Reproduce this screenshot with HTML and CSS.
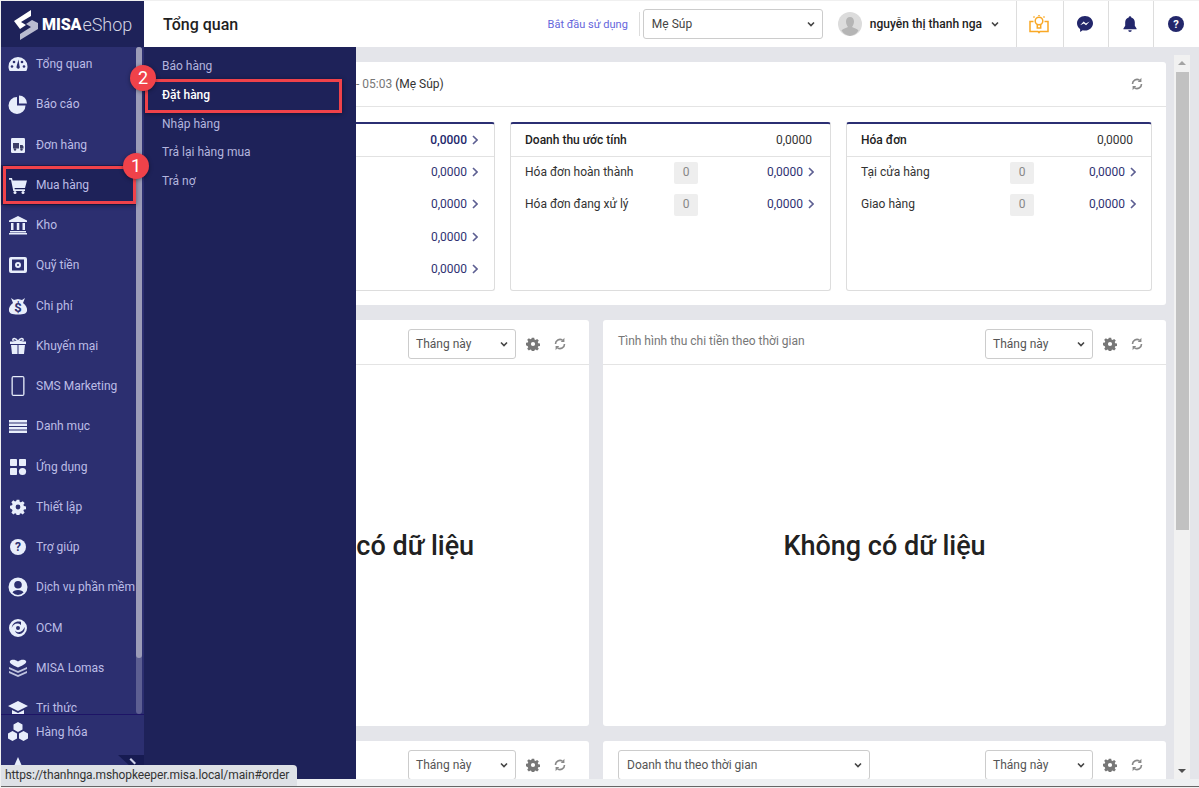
FILE: index.html
```html
<!DOCTYPE html>
<html lang="vi">
<head>
<meta charset="utf-8">
<title>MISA eShop - Tổng quan</title>
<link rel="stylesheet" href="styles.css">
</head>
<body>
<svg class="defs" width="0" height="0" aria-hidden="true">
  <symbol id="chev" viewBox="0 0 8 8"><path d="M1 2.5l3 3 3-3" fill="none" stroke="currentColor" stroke-width="1.6"/></symbol>
  <symbol id="arrow" viewBox="0 0 6 10"><path d="M1 1l4 4-4 4" fill="none" stroke="currentColor" stroke-width="1.6"/></symbol>
  <symbol id="refresh" viewBox="0 0 14 14"><path d="M2.500 7A4.500 4.500 0 0 1 9.500 3.200M11.500 7A4.500 4.500 0 0 1 4.500 10.800" fill="none" stroke="currentColor" stroke-width="1.6"/><path d="M7.800 5h3.600V.8zM6.200 9H2.600v4.200z" fill="currentColor"/></symbol>
  <symbol id="gear" viewBox="0 0 20 20"><path fill="currentColor" fill-rule="evenodd" d="M8.3 1h3.4l.5 2.6 1.5.6 2.2-1.5 2.4 2.4-1.5 2.2.6 1.5 2.6.5v3.4l-2.6.5-.6 1.5 1.5 2.2-2.4 2.4-2.2-1.5-1.5.6-.5 2.6H8.3l-.5-2.6-1.5-.6-2.2 1.5-2.4-2.4 1.5-2.2-.6-1.5L0 11.7V8.3l2.6-.5.6-1.5-1.5-2.2 2.4-2.4 2.2 1.5 1.5-.6zM10 7a3 3 0 1 0 0 6 3 3 0 0 0 0-6z"/></symbol>
</svg>
<div class="window">
  <div class="app">
    <aside class="sidebar">
      <div class="logo">
        <svg class="logo-mark" viewBox="0 0 26 31" aria-hidden="true"><path fill="#fff" d="M1 12L18 1v6L8 13l5 3-6 4z"/><path fill="#b9bbcf" d="M25 14v6L7 31v-6l11-7-5-3 6-4z"/></svg>
        <span class="logo-misa">MISA</span><span class="logo-shop">eShop</span>
      </div>
      <nav class="menu">
        <div class="menu-inner">
          <a class="item"><svg class="ic" viewBox="0 0 20 20"><path d="M10 3a9.500 9.500 0 0 0-9.500 9.500c0 1.700.4 3 1.200 4.500h16.600c.8-1.500 1.200-2.800 1.200-4.500A9.500 9.500 0 0 0 10 3z"/><g fill="#2c2f70"><circle cx="4" cy="12.500" r="1.300"/><circle cx="6" cy="8" r="1.300"/><circle cx="16" cy="12.500" r="1.300"/><circle cx="14" cy="8" r="1.300"/><path d="M10.500 5.500l1 6.500a1.700 1.700 0 1 1-2.800.1z"/></g></svg><span>Tổng quan</span></a>
          <a class="item"><svg class="ic" viewBox="0 0 20 20"><path d="M9 3v8.500h8.500A8.500 8.500 0 1 1 9 3z"/><path d="M11 1.500A8 8 0 0 1 19 9.500h-8z"/></svg><span>Báo cáo</span></a>
          <a class="item"><svg class="ic" viewBox="0 0 20 20"><rect x="3" y="3" width="14" height="15" rx="1.200"/><path fill="#3a3d66" d="M5 8h6v5.500H5zM12 10h2.500l1 1.500v2H12z"/><circle cx="7" cy="14.500" r="1.200" fill="#3a3d66"/><circle cx="13.500" cy="14.500" r="1.200" fill="#3a3d66"/></svg><span>Đơn hàng</span></a>
          <a class="item active"><svg class="ic" viewBox="0 0 20 20"><path d="M1 3h3l.6 2.500H19l-2 7.500H6.500l.3 1.300H17v1.700H5.300L3 4.700H1z"/><circle cx="7" cy="17.500" r="1.500"/><circle cx="15" cy="17.500" r="1.500"/></svg><span>Mua hàng</span></a>
          <a class="item"><svg class="ic" viewBox="0 0 20 20"><path d="M10 1l9 4.500V7H1V5.500zM2 16h16v1.500H2zM1 18h18v1.500H1zM3 8h2.500v7H3zM8.800 8h2.500v7H8.800zM14.500 8H17v7h-2.500z"/></svg><span>Kho</span></a>
          <a class="item"><svg class="ic" viewBox="0 0 20 20"><path fill-rule="evenodd" d="M3 2h14a2 2 0 0 1 2 2v12a2 2 0 0 1-2 2H3a2 2 0 0 1-2-2V4a2 2 0 0 1 2-2zm1 2.500v11h12v-11zM10 7a3 3 0 1 1 0 6 3 3 0 0 1 0-6zm0 2a1 1 0 1 0 0 2 1 1 0 0 0 0-2z"/></svg><span>Quỹ tiền</span></a>
          <a class="item"><svg class="ic" viewBox="0 0 20 20"><path d="M3 2l3 2 4-1 4 1 3-2-2 5c3 2 4.500 5 4 8-.5 2.500-3 3.500-9 3.500S1.500 17.500 1 15c-.5-3 1-6 4-8z"/><text x="10" y="16" class="ic-text">$</text></svg><span>Chi phí</span></a>
          <a class="item"><svg class="ic" viewBox="0 0 20 20"><path d="M3 9h6.500v9H4zM10.500 9H17l-1 9h-5.500zM2 5.500h16V8H2z"/><path fill="none" stroke="currentColor" stroke-width="1.500" d="M10 5.500C8 1.500 4 2 5 4.500c.5 1 3 1 5 1zm0 0c2-4 6-3.500 5-1-.5 1-3 1-5 1z"/></svg><span>Khuyến mại</span></a>
          <a class="item"><svg class="ic" viewBox="0 0 20 20"><path fill-rule="evenodd" d="M5.500 0h9a2 2 0 0 1 2 2v16a2 2 0 0 1-2 2h-9a2 2 0 0 1-2-2V2a2 2 0 0 1 2-2zm-.7 1.200v17.600h10.400V1.200z"/></svg><span>SMS Marketing</span></a>
          <a class="item"><svg class="ic" viewBox="0 0 20 20"><path d="M1 4h18v2.500H1zM1 7.500h18V10H1zM1 11h18v2.500H1zM1 14.500h18V17H1z"/></svg><span>Danh mục</span></a>
          <a class="item"><svg class="ic" viewBox="0 0 20 20"><rect x="2" y="2" width="7" height="7" rx=".8"/><rect x="11" y="2" width="7" height="7" rx=".8"/><rect x="2" y="11" width="7" height="7" rx=".8"/><circle cx="14.500" cy="14.500" r="3.600"/></svg><span>Ứng dụng</span></a>
          <a class="item"><svg class="ic small" viewBox="0 0 20 20"><use href="#gear"/></svg><span>Thiết lập</span></a>
          <a class="item"><svg class="ic small" viewBox="0 0 20 20"><circle cx="10" cy="10" r="10"/><text x="10" y="15.500" class="ic-text big">?</text></svg><span>Trợ giúp</span></a>
          <a class="item"><svg class="ic" viewBox="0 0 20 20"><path fill-rule="evenodd" d="M10 .5a9.500 9.500 0 1 1 0 19 9.500 9.500 0 0 1 0-19zm0 3.500a3.800 3.800 0 1 0 0 7.600A3.800 3.800 0 0 0 10 4zm0 9c-2.800 0-5 1-5.500 2.500a7.500 7.500 0 0 0 11 0C15 14 12.800 13 10 13z"/></svg><span>Dịch vụ phần mềm</span></a>
          <a class="item"><svg class="ic" viewBox="0 0 20 20"><path fill-rule="evenodd" d="M10 1a9 9 0 1 1 0 18 9 9 0 0 1 0-18zm3 2.800c-4.500-1.500-9 1.500-9.200 6 1-3 4-5 7.200-4 .7.200 1.500.800 2 1.500zM16.500 9c-1 3.500-4 6-7.500 5-.8-.2-1.500-.7-2-1.500.5 2.500 3 4 5.500 3.300 3-.8 4.800-3.800 4-6.800zM10 8a2 2 0 1 0 0 4 2 2 0 0 0 0-4z"/></svg><span>OCM</span></a>
          <a class="item"><svg class="ic" viewBox="0 0 20 20"><path d="M10 9.500C4 7 1 5 2 3c1-1.500 5-2 8 .5 3-2.500 7-2 8-.5 1 2-2 4-8 6.500z"/><path fill="#bfc3de" d="M1 9l9 4 9-4v2l-9 4-9-4zM1 13l9 4 9-4v2l-9 4-9-4z"/></svg><span>MISA Lomas</span></a>
          <a class="item"><svg class="ic" viewBox="0 0 20 20"><path d="M10 3L0 8l10 5 10-5zM4 12v4c2 2 10 2 12 0v-4l-6 3z"/></svg><span>Tri thức</span></a>
        </div>
        <div class="menu-track"><div class="menu-thumb"></div></div>
      </nav>
      <div class="foot">
        <a class="item foot-item"><svg class="ic big-ic" viewBox="0 0 22 20"><path d="M11 0l4.500 2.500v5L11 10 6.500 7.500v-5zM5.500 9l4.500 2.500v5L5.500 19 1 16.500v-5zM16.500 9l4.500 2.500v5L16.500 19 12 16.500v-5z"/></svg><span>Hàng hóa</span></a>
        <a class="item foot-item"><svg class="ic" viewBox="0 0 20 20"><path d="M10 2L3 18h14z"/></svg></a>
        <svg class="corner" viewBox="0 0 26 24" aria-hidden="true"><path d="M0 0h26v24z" fill="#171b52"/><path d="M13 3l5 5-1.500 1.500-5-5z" fill="#cfd2ea"/></svg>
      </div>
    </aside>

    <div class="main">
      <header class="topbar">
        <h1 class="page-title">Tổng quan</h1>
        <a class="start-link">Bắt đầu sử dụng</a>
        <span class="sep"></span>
        <div class="select shop-select"><span>Mẹ Súp</span><svg class="chev"><use href="#chev"/></svg></div>
        <svg class="avatar" viewBox="0 0 24 24" aria-hidden="true"><circle cx="12" cy="12" r="12" fill="#dcdcdc"/><path fill="#b5b5b5" d="M12 5c2.500 0 4 2 4 4.500S14.800 14 14 15c2 1 5 1.500 6.500 3.500A12 12 0 0 1 12 24a12 12 0 0 1-8.500-5.500C5 16.500 8 16 10 15c-.8-1-2-3-2-5.500S9.500 5 12 5z"/></svg>
        <span class="user-name">nguyễn thị thanh nga</span>
        <svg class="chev user-chev"><use href="#chev"/></svg>
        <div class="tools">
          <button class="tool t1"><svg viewBox="0 0 20 20" width="20" height="20"><g fill="none" stroke="#f9a825" stroke-width="1.500"><path d="M4.500 7.500H1v10h8l1 1.200 1-1.200h8v-10h-3.500"/><circle cx="10" cy="7" r="3.800"/><path d="M8.300 10.500v3.500h3.400v-3.500M10 1v1M4.500 2.500l1 1M15.500 2.500l-1 1"/></g></svg></button>
          <button class="tool t2"><svg viewBox="0 0 18 18" width="16" height="16"><path fill="#23276b" d="M9 0c5 0 9 3.600 9 8.200s-4 8.200-9 8.200c-.9 0-1.700-.1-2.500-.3L3.500 18v-3.300C1.400 13.200 0 10.900 0 8.200 0 3.600 4 0 9 0z"/><path fill="#fff" d="M3.500 10.500l4-4.200 2.500 2.200 4.200-2.200-4 4.200-2.500-2.200z"/></svg></button>
          <button class="tool t3"><svg viewBox="0 0 16 18" width="14" height="16"><path fill="#23276b" d="M8 0a1.500 1.500 0 0 1 1.500 1.500C12 2.200 13.500 4.500 13.500 7v4l2 3v1H.5v-1l2-3V7c0-2.500 1.500-4.800 4-5.500A1.500 1.500 0 0 1 8 0zM6 16h4a2 2 0 0 1-4 0z"/></svg></button>
          <button class="tool t4"><svg viewBox="0 0 20 20" width="16" height="16"><circle cx="10" cy="10" r="10" fill="#23276b"/><text x="10" y="15.500" class="tool-q">?</text></svg></button>
        </div>
      </header>

      <div class="body">
        <div class="content">
          <section class="panel">
            <div class="panel-head">
              <p class="period"><span class="muted">- 05:03</span> (Mẹ Súp)</p>
              <svg class="refresh"><use href="#refresh"/></svg>
            </div>
            <div class="cards">
              <article class="card c1">
                <div class="card-head"><span class="grow"></span><b class="navy">0,0000</b><svg class="arr"><use href="#arrow"/></svg></div>
                <div class="rows rows-tight">
                  <div class="row"><span class="val">0,0000</span><svg class="arr"><use href="#arrow"/></svg></div>
                  <div class="row"><span class="val">0,0000</span><svg class="arr"><use href="#arrow"/></svg></div>
                  <div class="row"><span class="val">0,0000</span><svg class="arr"><use href="#arrow"/></svg></div>
                  <div class="row"><span class="val">0,0000</span><svg class="arr"><use href="#arrow"/></svg></div>
                </div>
              </article>
              <article class="card c2">
                <div class="card-head"><b>Doanh thu ước tính</b><span class="grow"></span><span>0,0000</span></div>
                <div class="rows">
                  <div class="row"><span class="label">Hóa đơn hoàn thành</span><span class="pill">0</span><span class="val">0,0000</span><svg class="arr"><use href="#arrow"/></svg></div>
                  <div class="row"><span class="label">Hóa đơn đang xử lý</span><span class="pill">0</span><span class="val">0,0000</span><svg class="arr"><use href="#arrow"/></svg></div>
                </div>
              </article>
              <article class="card c3">
                <div class="card-head"><b>Hóa đơn</b><span class="grow"></span><span>0,0000</span></div>
                <div class="rows">
                  <div class="row"><span class="label">Tại cửa hàng</span><span class="pill">0</span><span class="val">0,0000</span><svg class="arr"><use href="#arrow"/></svg></div>
                  <div class="row"><span class="label">Giao hàng</span><span class="pill">0</span><span class="val">0,0000</span><svg class="arr"><use href="#arrow"/></svg></div>
                </div>
              </article>
            </div>
          </section>

          <div class="charts">
            <section class="chart">
              <div class="chart-head">
                <span class="grow"></span>
                <div class="select month"><span>Tháng này</span><svg class="chev"><use href="#chev"/></svg></div>
                <svg class="gear"><use href="#gear"/></svg>
                <svg class="refresh"><use href="#refresh"/></svg>
              </div>
              <div class="no-data">Không có dữ liệu</div>
            </section>
            <section class="chart">
              <div class="chart-head">
                <span class="chart-title">Tình hình thu chi tiền theo thời gian</span>
                <span class="grow"></span>
                <div class="select month"><span>Tháng này</span><svg class="chev"><use href="#chev"/></svg></div>
                <svg class="gear"><use href="#gear"/></svg>
                <svg class="refresh"><use href="#refresh"/></svg>
              </div>
              <div class="no-data">Không có dữ liệu</div>
            </section>
            <section class="chart">
              <div class="chart-head">
                <span class="grow"></span>
                <div class="select month"><span>Tháng này</span><svg class="chev"><use href="#chev"/></svg></div>
                <svg class="gear"><use href="#gear"/></svg>
                <svg class="refresh"><use href="#refresh"/></svg>
              </div>
            </section>
            <section class="chart">
              <div class="chart-head">
                <div class="select wide"><span>Doanh thu theo thời gian</span><svg class="chev"><use href="#chev"/></svg></div>
                <span class="grow"></span>
                <div class="select month"><span>Tháng này</span><svg class="chev"><use href="#chev"/></svg></div>
                <svg class="gear"><use href="#gear"/></svg>
                <svg class="refresh"><use href="#refresh"/></svg>
              </div>
            </section>
          </div>
        </div>
        <div class="vscroll">
          <span class="vs-up"></span>
          <span class="vs-thumb"></span>
          <span class="vs-down"></span>
        </div>
      </div>
    </div>

    <div class="flyout">
      <a class="fly-item">Báo hàng</a>
      <a class="fly-item on">Đặt hàng</a>
      <a class="fly-item">Nhập hàng</a>
      <a class="fly-item">Trả lại hàng mua</a>
      <a class="fly-item">Trả nợ</a>
    </div>

    <div class="mark rect1"></div>
    <div class="mark rect2"></div>
    <div class="badge b1">1</div>
    <div class="badge b2">2</div>
  </div>
  <div class="strip"></div>
  <div class="tooltip">https://thanhnga.mshopkeeper.misa.local/main#order</div>
</div>
</body>
</html>
```

FILE: styles.css
```css
* { box-sizing: border-box; }
html, body { margin: 0; padding: 0; height: 100%; overflow: hidden; background: #fff; }
body { font-family: Roboto, "Liberation Sans", sans-serif; font-size: 12px; color: #333; }
.defs { position: absolute; }
a { text-decoration: none; }

.window { position: relative; height: 788px; padding: 1px 0 0 1px; background: #f0f0f0; overflow: hidden; }
.app { position: relative; display: flex; height: 778px; background: #e4e5ea; }
.strip { height: 8px; background: #eef0f2; border-bottom: 1px solid #666; }

/* sidebar */
.sidebar { position: relative; flex: 0 0 143px; display: flex; flex-direction: column; background: #2c2f70; color: #bcbde6; }
.logo { flex: 0 0 46px; display: flex; align-items: center; background: #1e2259; padding-left: 12px; }
.logo-mark { width: 26px; height: 31px; margin-right: 3px; }
.logo-misa { color: #fff; font-weight: 900; font-size: 16px; letter-spacing: -.1px; }
.logo-shop { color: #d4d5e4; font-weight: 300; font-size: 18px; margin-left: 1px; }

.menu { position: relative; flex: 1; overflow: hidden; }
.menu-inner { margin-top: -3px; }
.item { display: flex; align-items: center; height: 40.25px; padding-left: 7px; color: #bcbde6; white-space: nowrap; }
.item span { margin-left: 8px; }
.item.active { background: #1e2259; margin-right: 8px; }
.ic { flex: 0 0 20px; width: 20px; height: 20px; fill: currentColor; color: #e8eefb; }
.ic.small { width: 16px; height: 16px; flex: 0 0 16px; margin: 0 2px; }
.big-ic { width: 22px; flex: 0 0 22px; height: 20px; margin-left: -1px; margin-right: -1px; }
.ic-text { font: 700 13px Roboto, sans-serif; text-anchor: middle; fill: #2c2f70; }
.ic-text.big { font-size: 15px; }
.menu-track { position: absolute; left: 135px; top: 0; width: 6px; height: 100%; border-radius: 3px; background: #5d5f92; }
.menu-thumb { height: 611px; border-radius: 3px; background: #9c9cb8; }

.foot { position: relative; flex: 0 0 65px; border-top: 1px solid #1d1466; overflow: hidden; }
.foot-item { height: 33px; }
.corner { position: absolute; right: 0; bottom: 0; width: 26px; height: 24px; }

/* flyout */
.flyout { position: absolute; left: 143px; top: 46px; bottom: 0; width: 212px; padding: 5px 0 0 18px; background: #1e2259; }
.fly-item { display: flex; align-items: center; height: 28.7px; color: #b4b5de; }
.fly-item.on { color: #fff; font-weight: 500; }

/* annotations */
.mark { position: absolute; border: 3px solid #f0424a; box-shadow: 0 1px 5px rgba(0,0,0,.45); }
.rect1 { left: 2px; top: 165px; width: 133px; height: 38px; }
.rect2 { left: 144px; top: 78px; width: 197px; height: 34px; }
.badge { position: absolute; width: 26px; height: 26px; border-radius: 50%; background: #f0424a; color: #fff; font-size: 18px; line-height: 26px; text-align: center; box-shadow: 0 1px 4px rgba(0,0,0,.4); }
.b1 { left: 122px; top: 152px; }
.b2 { left: 129px; top: 64px; }

/* main */
.main { flex: 1; min-width: 0; display: flex; flex-direction: column; }
.topbar { flex: 0 0 46px; display: flex; align-items: center; background: #fff; padding-left: 19px; }
.page-title { margin: 0; font-size: 16px; font-weight: 500; color: #1f1f1f; }
.start-link { margin-left: auto; font-size: 11px; color: #6565dc; }
.sep { width: 1px; height: 24px; margin: 0 3px 0 11px; background: #ddd; }
.select { display: flex; align-items: center; justify-content: space-between; height: 30px; padding: 0 7px; background: #fff; border: 1px solid #ccc; border-radius: 3px; color: #444; white-space: nowrap; }
.chev { width: 8px; height: 8px; color: #444; flex: none; }
.shop-select { width: 180px; padding-left: 8px; }
.avatar { width: 24px; height: 24px; margin-left: 15px; }
.user-name { margin-left: 8px; font-weight: 500; color: #222; white-space: nowrap; }
.user-chev { margin: 0 17px 0 9px; }
.tools { display: flex; height: 100%; }
.tool { display: flex; align-items: center; justify-content: center; height: 100%; padding: 0 2px 0 0; background: none; border: 0; border-left: 1px solid #ddd; }
.t1 { width: 47px; }
.t2, .t3 { width: 45px; }
.t4 { width: 46px; }
.tool-q { font: 700 14px Roboto, sans-serif; text-anchor: middle; fill: #fff; }

.body { flex: 1; min-height: 0; display: flex; }
.content { flex: 0 0 1030px; display: flex; flex-direction: column; gap: 15px; padding: 15px 8px 0 13px; overflow: hidden; }
.vscroll { position: relative; flex: 0 0 16px; margin-top: 8px; background: #f1f1f1; }
.vs-thumb { position: absolute; left: 2px; top: 17px; width: 13px; height: 458px; background: #c1c1c1; }
.vs-up, .vs-down { position: absolute; left: 4px; width: 0; height: 0; border-left: 4px solid transparent; border-right: 4px solid transparent; }
.vs-up { top: 6px; border-bottom: 4px solid #a3a3a3; }
.vs-down { bottom: 6px; border-top: 4px solid #505050; }

.panel { flex: none; height: 243px; background: #fff; border-radius: 3px; }
.panel-head { display: flex; align-items: center; justify-content: space-between; height: 45px; padding: 0 22px 0 199px; border-bottom: 1px solid #e4e4e4; }
.period { margin: 0; color: #333; }
.muted { color: #777; }
.refresh { width: 14px; height: 14px; color: #888; flex: none; }
.cards { display: grid; grid-template-columns: 323px 321px 306px; gap: 15px; padding: 15px 0 0 15px; }
.card { height: 169px; border: 1px solid #ddd; border-top: 2px solid #2b2f73; border-radius: 3px; }
.card-head { display: flex; align-items: center; height: 33px; border-bottom: 1px solid #e2e2e2; color: #333; }
.card-head b { font-weight: 500; color: #222; }
.card-head b.navy { color: #23276b; }
.grow { flex: 1; }
.c1 .card-head { padding-right: 16px; }
.c2 .card-head { padding: 0 18px 0 14px; }
.c3 .card-head { padding: 0 18px 0 14px; }
.arr { width: 6px; height: 10px; margin-left: 5px; color: #5d5f92; flex: none; }
.rows { display: flex; flex-direction: column; gap: 10px; padding: 5px 16px 0 14px; }
.c3 .rows { padding-right: 15px; }
.rows-tight { gap: 12.3px; padding-right: 16px; padding-top: 5px; }
.row { display: flex; align-items: flex-start; height: 22px; line-height: 20px; color: #333; }
.rows-tight .row { height: 20px; }
.label { width: 149px; white-space: nowrap; }
.pill { width: 24px; height: 22px; text-align: center; background: #eee; border-radius: 2px; color: #888; }
.val { flex: 1; text-align: right; color: #2f3272; }
.row .arr { margin-top: 5px; }

.charts { display: grid; grid-template-columns: 432px 563px; gap: 15px 14px; }
.chart { height: 406px; background: #fff; border-radius: 3px; display: flex; flex-direction: column; }
.chart-head { display: flex; align-items: center; flex: 0 0 45px; padding: 3px 22px 0 15px; border-bottom: 1px solid #e4e4e4; }
.chart-title { color: #777; position: relative; top: -3px; }
.month { width: 108px; color: #555; }
.wide { width: 252px; padding-left: 8px; color: #555; }
.gear { width: 14px; height: 14px; margin: 0 13px 0 10px; color: #777; flex: none; }
.no-data { flex: 1; display: flex; align-items: center; justify-content: center; font-size: 27px; font-weight: 500; color: #212121; }

.tooltip { position: absolute; left: 1px; bottom: 2px; width: 296px; height: 21px; padding-left: 4px; background: #dee1e6; border-radius: 0 4px 0 0; color: #333; font-family: Roboto, sans-serif; font-size: 12px; letter-spacing: -.1px; line-height: 21px; white-space: nowrap; }
```
